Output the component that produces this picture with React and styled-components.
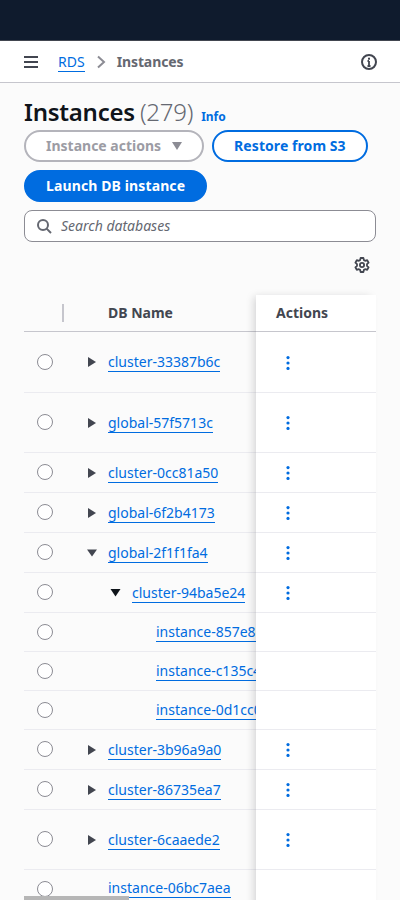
import React from "react";
import styled, { createGlobalStyle } from "styled-components";

const Global = createGlobalStyle`
  html, body { margin: 0; padding: 0; height: 900px; overflow: hidden; background: #fbfbfb; }
  body { font-family: "Noto Sans", "Open Sans", sans-serif; font-size: 14px; line-height: 20px; color: #0f141a; }
  * { box-sizing: border-box; }
`;

const Page = styled.div`position: relative; height: 900px; width: 400px; overflow: hidden;`;
const TopBar = styled.header`height: 41px; background: #0f1b2d; border-bottom: 1px solid #424650;`;
const Nav = styled.nav`
  height: 42px; background: #fff; border-bottom: 1px solid #c6c6cd;
  display: flex; align-items: center; padding: 0 23px 0 24px;
`;
const Menu = styled.svg`width: 14px; height: 12px; margin-right: 20px; flex: none;`;
const Crumb = styled.a`color: #006ce0; border-bottom: 1px solid #006ce0; line-height: 19px; height: 20px;`;
const Chevron = styled.svg`width: 10px; height: 14px; margin: 0 11px 0 11px; flex: none;`;
const Current = styled.span`font-weight: 700; color: #656871; letter-spacing: -.1px;`;
const InfoIcon = styled.svg`width: 16px; height: 16px; margin-left: auto; flex: none;`;

const Content = styled.main`padding: 14px 24px 0;`;
const Title = styled.div`display: flex; align-items: baseline; height: 33px;`;
const H1 = styled.h1`margin: 0; font-size: 24px; line-height: 30px; font-weight: 600; letter-spacing: -.24px; color: #0f141a;`;
const Count = styled.span`font-size: 24px; line-height: 30px; font-weight: 300; letter-spacing: -.24px; color: #656871; margin-left: 5px;`;
const InfoLink = styled.a`font-size: 12px; font-weight: 700; color: #006ce0; margin-left: 8px;`;
const Actions = styled.div`display: flex; flex-wrap: wrap; gap: 8px; margin-bottom: 8px;`;
const Button = styled.button`
  height: 32px; padding: 0 20px; border-radius: 16px; border: 2px solid #006ce0; background: #fff;
  color: #006ce0; font: 700 14px/20px "Noto Sans", sans-serif; display: flex; align-items: center;
  letter-spacing: .07px;
`;
const DisabledButton = styled(Button)`
  border-color: #b4b4bb; color: #9c9ca4; background: #fff; gap: 11px; letter-spacing: 0;
`;
const PrimaryButton = styled(Button)`background: #006ce0; color: #fff; border-color: #006ce0; letter-spacing: .12px;`;
const Caret = styled.svg`width: 10px; height: 8px; flex: none;`;
const Search = styled.div`
  height: 32px; background: #fff; border: 1px solid #8c8c94; border-radius: 8px;
  display: flex; align-items: center; padding: 0 12px; gap: 9px;
`;
const SearchIcon = styled.svg`width: 15px; height: 15px; flex: none;`;
const Placeholder = styled.span`font-style: italic; color: #656871;`;
const Prefs = styled.div`display: flex; justify-content: flex-end; padding: 15px 6px 0 0; height: 53px;`;
const Gear = styled.svg`width: 16px; height: 16px;`;

const Table = styled.div`display: flex; width: 352px;`;
const Names = styled.div`width: 232px; flex: none; overflow: hidden;`;
const ActionColumn = styled.div`
  width: 120px; flex: none; background: #fff; box-shadow: -4px 0 8px -2px rgba(15, 20, 26, .17);
`;
const NameHead = styled.div`
  height: 37px; border-bottom: 1px solid #c6c6cd; display: flex; align-items: center;
  font-weight: 700; color: #424650; padding-left: 38px;
`;
const HeadDivider = styled.i`width: 2px; height: 18px; background: #c6c6cd; margin-right: 44px;`;
const ActionHead = styled(NameHead)`padding-left: 20px;`;
const NameRow = styled.div`
  height: ${p => p.$h}px; border-bottom: 1px solid #ebebf0; display: flex; align-items: center;
  padding-left: 13px; white-space: nowrap;
`;
const ActionRow = styled.div`
  height: ${p => p.$h}px; border-bottom: 1px solid #ebebf0; display: flex; align-items: center; padding-left: 30px;
`;
const Radio = styled.span`
  width: 16px; height: 16px; border-radius: 50%; border: 1.3px solid #8c8c94; background: #fff; flex: none; margin-top: -1px;
`;
const Indent = styled.span`
  width: ${p => p.$w}px; flex: none; display: flex; justify-content: flex-end; padding-right: ${p => p.$pad}px;
`;
const Tri = styled.svg`width: ${p => p.$s}px; height: ${p => p.$s}px; flex: none;`;
const Link = styled.a`
  color: #006ce0; border-bottom: 1px solid #006ce0; line-height: 19px; height: 20px; flex: none;
  margin-top: ${p => (p.$raised ? "-4px" : "0")};
`;
const Dots = styled.svg`width: 4px; height: 14px; flex: none; margin-top: 1px;`;
const Scrollbar = styled.div`position: absolute; left: 24px; bottom: 0; width: 105px; height: 4px; background: #b6b6b6;`;

const rows = [
  { name: "cluster-33387b6c", h: 61, kind: "closed", act: true },
  { name: "global-57f5713c", h: 60, kind: "closed", act: true },
  { name: "cluster-0cc81a50", h: 40, kind: "closed", act: true },
  { name: "global-6f2b4173", h: 40, kind: "closed", act: true },
  { name: "global-2f1f1fa4", h: 40, kind: "open", act: true },
  { name: "cluster-94ba5e24", h: 40, kind: "nested", act: true },
  { name: "instance-857e8c41", h: 39, kind: "leaf" },
  { name: "instance-c135c4a2", h: 39, kind: "leaf" },
  { name: "instance-0d1cc0b7", h: 39, kind: "leaf" },
  { name: "cluster-3b96a9a0", h: 40, kind: "closed", act: true },
  { name: "cluster-86735ea7", h: 40, kind: "closed", act: true },
  { name: "cluster-6caaede2", h: 60, kind: "closed", act: true },
  { name: "instance-06bc7aea", h: 40, kind: "plain" },
];

const Toggle = ({ kind }) => {
  if (kind === "closed")
    return <Indent $w={55} $pad={11}><Tri $s={10} viewBox="0 0 10 10"><path d="M1 0L9 5L1 10Z" fill="#424650" /></Tri></Indent>;
  if (kind === "open")
    return <Indent $w={55} $pad={11}><Tri $s={10} viewBox="0 0 10 10"><path d="M0 1.5H10L5 8.5Z" fill="#424650" /></Tri></Indent>;
  if (kind === "nested")
    return <Indent $w={79} $pad={11}><Tri $s={11} viewBox="0 0 11 11"><path d="M0.5 2H10.5L5.5 9.5Z" fill="#0f141a" /></Tri></Indent>;
  if (kind === "leaf") return <Indent $w={103} $pad={0} />;
  return <Indent $w={55} $pad={0} />;
};

export default function App() {
  return (
    <Page>
      <Global />
      <TopBar />
      <Nav>
        <Menu viewBox="0 0 14 12"><path d="M0 1H14M0 6H14M0 11H14" stroke="#424650" strokeWidth="2" /></Menu>
        <Crumb>RDS</Crumb>
        <Chevron viewBox="0 0 10 14"><path d="M2 1.5L8 7L2 12.5" fill="none" stroke="#8c8c94" strokeWidth="2" /></Chevron>
        <Current>Instances</Current>
        <InfoIcon viewBox="0 0 16 16">
          <circle cx="8" cy="8" r="7" fill="none" stroke="#424650" strokeWidth="2" />
          <path d="M8 7V12M6.5 7H8M6.5 12H9.5" fill="none" stroke="#424650" strokeWidth="1.8" />
          <rect x="7" y="3.7" width="2" height="2" fill="#424650" />
        </InfoIcon>
      </Nav>
      <Content>
        <Title>
          <H1>Instances</H1>
          <Count>(279)</Count>
          <InfoLink>Info</InfoLink>
        </Title>
        <Actions>
          <DisabledButton>Instance actions
            <Caret viewBox="0 0 10 8"><path d="M0 0H10L5 8Z" fill="#8c8c94" /></Caret>
          </DisabledButton>
          <Button>Restore from S3</Button>
          <PrimaryButton>Launch DB instance</PrimaryButton>
        </Actions>
        <Search>
          <SearchIcon viewBox="0 0 15 15">
            <circle cx="6" cy="6" r="5" fill="none" stroke="#656871" strokeWidth="2" />
            <path d="M9.6 9.6L14 14" stroke="#656871" strokeWidth="2" />
          </SearchIcon>
          <Placeholder>Search databases</Placeholder>
        </Search>
        <Prefs>
          <Gear viewBox="0 0 16 16">
            <path d="M6.6 1H9.4L9.9 3.1L11.1 3.8L13.2 3.2L14.6 5.6L13 7.1V8.9L14.6 10.4L13.2 12.8L11.1 12.2L9.9 12.9L9.4 15H6.6L6.1 12.9L4.9 12.2L2.8 12.8L1.4 10.4L3 8.9V7.1L1.4 5.6L2.8 3.2L4.9 3.8L6.1 3.1Z" fill="none" stroke="#424650" strokeWidth="1.8" strokeLinejoin="round" />
            <circle cx="8" cy="8" r="2.1" fill="none" stroke="#424650" strokeWidth="1.8" />
          </Gear>
        </Prefs>
        <Table>
          <Names>
            <NameHead><HeadDivider />DB Name</NameHead>
            {rows.map(r => (
              <NameRow key={r.name} $h={r.h}>
                <Radio />
                <Toggle kind={r.kind} />
                <Link $raised={r.kind === "plain"}>{r.name}</Link>
              </NameRow>
            ))}
          </Names>
          <ActionColumn>
            <ActionHead>Actions</ActionHead>
            {rows.map(r => (
              <ActionRow key={r.name} $h={r.h}>
                {r.act && (
                  <Dots viewBox="0 0 4 14">
                    <circle cx="2" cy="1.6" r="1.6" fill="#006ce0" />
                    <circle cx="2" cy="7" r="1.6" fill="#006ce0" />
                    <circle cx="2" cy="12.4" r="1.6" fill="#006ce0" />
                  </Dots>
                )}
              </ActionRow>
            ))}
          </ActionColumn>
        </Table>
      </Content>
      <Scrollbar />
    </Page>
  );
}
